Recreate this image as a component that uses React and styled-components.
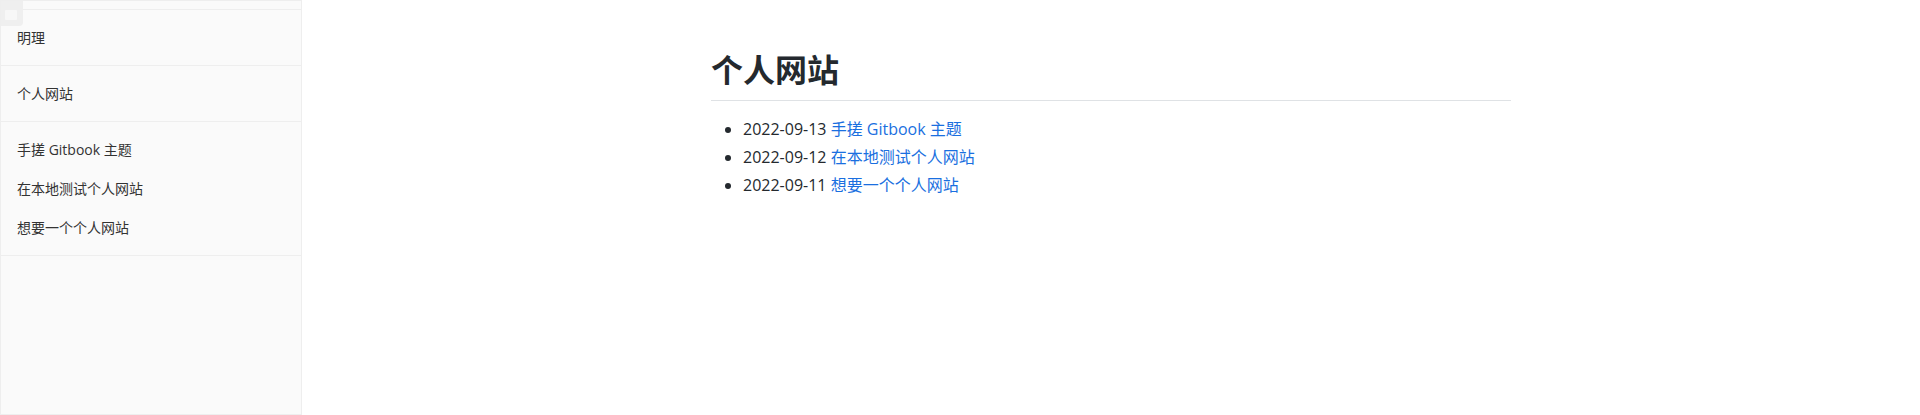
import React from "react";
import styled, { createGlobalStyle } from "styled-components";

const GlobalStyle = createGlobalStyle`
    html, body {
        margin: 0;
        padding: 0;
        background: #ffffff;
    }
    body {
        font-family: "Open Sans", "Noto Sans", "Noto Sans CJK SC", sans-serif;
        color: #24292e;
    }
`;

const Page = styled.div`
    display: flex;
    flex-direction: row;
    height: 415px;
`;

const Sidebar = styled.nav`
    position: relative;
    width: 302px;
    height: 415px;
    box-sizing: border-box;
    background-color: #fafafa;
    border: 1px solid #eeeeee;
    flex-shrink: 0;
`;

const SidebarHeader = styled.div`
    height: 8px;
    border-bottom: 1px solid #eeeeee;
`;

const ToggleButton = styled.div`
    position: absolute;
    top: 0;
    left: 0;
    width: 22px;
    height: 25px;
    box-sizing: border-box;
    padding: 9px 5px 5px 4px;
    background-color: #efefef;
    border-radius: 0 0 4px 0;
`;

const ToggleInner = styled.div`
    width: 12px;
    height: 10px;
    background-color: #f7f7f7;
    border-radius: 1px;
`;

const Section = styled.ul`
    list-style: none;
    margin: 0;
    padding: 8px 0;
    border-bottom: 1px solid #eeeeee;
`;

const NavItem = styled.li`
    height: 39px;
    line-height: 39px;
    padding-left: 16px;
    font-size: 14px;
    color: #333333;
    white-space: nowrap;
`;

const Main = styled.main`
    flex: 1;
    display: flex;
    justify-content: center;
`;

const Article = styled.article`
    width: 800px;
    padding-top: 50px;
`;

const Heading = styled.h1`
    margin: 0 0 16px;
    padding-bottom: 10px;
    font-size: 32px;
    line-height: 40px;
    font-weight: 700;
    color: #24292e;
    border-bottom: 1px solid #dfe2e5;
`;

const PostList = styled.ul`
    margin: 0;
    padding-left: 32px;
    font-size: 16px;
    line-height: 24px;
`;

const PostItem = styled.li`
    & + & {
        margin-top: 4px;
    }
`;

const PostLink = styled.a`
    color: #1a6fe0;
    text-decoration: none;
`;

const sections = [
    ["明理"],
    ["个人网站"],
    ["手搓 Gitbook 主题", "在本地测试个人网站", "想要一个个人网站"],
];

const posts = [
    { date: "2022-09-13", title: "手搓 Gitbook 主题" },
    { date: "2022-09-12", title: "在本地测试个人网站" },
    { date: "2022-09-11", title: "想要一个个人网站" },
];

const App = () => {
    return (
        <>
            <GlobalStyle />
            <Page>
                <Sidebar>
                    <SidebarHeader />
                    {sections.map((items, i) => (
                        <Section key={i}>
                            {items.map((item) => (
                                <NavItem key={item}>{item}</NavItem>
                            ))}
                        </Section>
                    ))}
                    <ToggleButton>
                        <ToggleInner />
                    </ToggleButton>
                </Sidebar>
                <Main>
                    <Article>
                        <Heading>个人网站</Heading>
                        <PostList>
                            {posts.map((post) => (
                                <PostItem key={post.date}>
                                    {post.date} <PostLink href="#">{post.title}</PostLink>
                                </PostItem>
                            ))}
                        </PostList>
                    </Article>
                </Main>
            </Page>
        </>
    );
};

export default App;
